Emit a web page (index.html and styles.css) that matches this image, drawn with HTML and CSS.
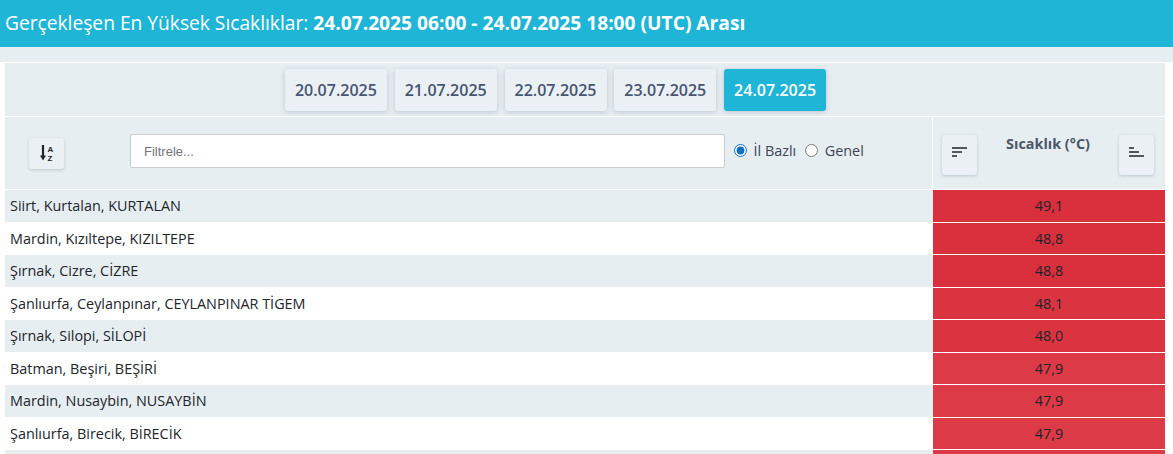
FILE: index.html
```html
<!DOCTYPE html>
<html lang="tr">
<head>
<meta charset="utf-8">
<title>Gerçekleşen En Yüksek Sıcaklıklar</title>
<link rel="stylesheet" href="styles.css">
</head>
<body>
<header class="title-bar">Gerçekleşen En Yüksek Sıcaklıklar: <b>24.07.2025 06:00 - 24.07.2025 18:00 (UTC) Arası</b></header>
<div class="strip"></div>
<main class="panel">
  <nav class="dates">
    <button class="date">20.07.2025</button>
    <button class="date">21.07.2025</button>
    <button class="date">22.07.2025</button>
    <button class="date">23.07.2025</button>
    <button class="date active">24.07.2025</button>
  </nav>
  <div class="tools">
    <div class="tools-left">
      <button class="icon-btn az" aria-label="A-Z">
        <svg width="14" height="19" viewBox="0 0 14 19"><path d="M3 1v12" fill="none" stroke="#212529" stroke-width="2.200"/><path d="M0 11.500h6l-3 5z" fill="#212529"/><text x="7.500" y="8" class="az-t">A</text><text x="7.500" y="17" class="az-t">Z</text></svg>
      </button>
      <input class="filter" type="text" placeholder="Filtrele...">
      <label class="radio"><input type="radio" name="scope" checked>İl Bazlı</label>
      <label class="radio"><input type="radio" name="scope">Genel</label>
    </div>
    <div class="tools-right">
      <button class="icon-btn sort">
        <svg width="15" height="10" viewBox="0 0 15 10"><path d="M0 1h15M0 5h10M0 9h5" stroke="#212529" stroke-width="1.700"/></svg>
      </button>
      <div class="col-title">Sıcaklık (°C)</div>
      <button class="icon-btn sort">
        <svg width="15" height="10" viewBox="0 0 15 10"><path d="M0 1h5M0 5h10M0 9h15" stroke="#212529" stroke-width="1.700"/></svg>
      </button>
    </div>
  </div>
  <div class="row odd"><div class="name">Siirt, Kurtalan, KURTALAN</div><div class="val t1">49,1</div></div>
  <div class="row"><div class="name">Mardin, Kızıltepe, KIZILTEPE</div><div class="val t1">48,8</div></div>
  <div class="row odd"><div class="name">Şırnak, Cizre, CİZRE</div><div class="val t1">48,8</div></div>
  <div class="row"><div class="name">Şanlıurfa, Ceylanpınar, CEYLANPINAR TİGEM</div><div class="val t2">48,1</div></div>
  <div class="row odd"><div class="name">Şırnak, Silopi, SİLOPİ</div><div class="val t2">48,0</div></div>
  <div class="row"><div class="name">Batman, Beşiri, BEŞİRİ</div><div class="val t3">47,9</div></div>
  <div class="row odd"><div class="name">Mardin, Nusaybin, NUSAYBİN</div><div class="val t3">47,9</div></div>
  <div class="row"><div class="name">Şanlıurfa, Birecik, BİRECİK</div><div class="val t3">47,9</div></div>
  <div class="row odd"><div class="name"></div><div class="val t3"></div></div>
</main>
</body>
</html>
```
FILE: styles.css
```css
* { box-sizing: border-box; }
html, body { margin: 0; height: 454px; overflow: hidden; background: #fff; }
body { font-family: "Open Sans", sans-serif; font-size: 14.400px; color: #212529; }
.title-bar {
  height: 47px; background: #1fb5d6; color: #fff;
  font-size: 19.200px; line-height: 45px; padding-left: 5px; white-space: nowrap;
}
.title-bar b { font-weight: 700; }
.strip { height: 15px; background: #e7eef2; }
.panel { margin: 1px 8px 0 5px; height: 391px; overflow: hidden; }
.dates {
  height: 54px; background: #e7eef2; border-bottom: 1px solid #fff;
  display: flex; justify-content: center; align-items: flex-start; gap: 7.800px; padding: 6px 59px 0 0;
}
.date {
  width: 102px; height: 42px; border: 0; border-radius: 3px; padding: 0;
  background: #ebf0f5; color: #475570;
  font: 600 16px "Open Sans", sans-serif;
  box-shadow: 0 1px 5px rgba(60, 75, 100, .25);
}
.date.active { background: #1fb5d6; color: #fff; }
.tools { height: 73px; display: flex; background: #e7eef2; border-bottom: 1px solid #fff; }
.tools-left {
  width: 928px; display: flex; align-items: flex-start; padding: 17px 0 0 24px;
  border-right: 1px solid #fff;
}
.icon-btn {
  border: 0; border-radius: 3px; background: #ebf0f5; padding: 0;
  display: flex; align-items: center; justify-content: center;
  box-shadow: 0 1px 3px rgba(60, 75, 100, .25);
}
.az { width: 35px; height: 31px; margin-top: 4px; }
.az-t { font: 700 8px "Liberation Sans", sans-serif; fill: #212529; }
.filter {
  width: 595px; height: 34px; margin: 0 9px 0 66px; padding: 0 13px;
  border: 1px solid #c8ccd0; border-radius: 2px; background: #fff;
  font: 13px "Liberation Sans", sans-serif;
}
.filter::placeholder { color: #6f757b; opacity: 1; }
.radio {
  display: flex; align-items: center; height: 32px; color: #3d4654;
  margin-right: 9px; font-size: 14.400px;
}
.radio input { width: 13px; height: 13px; margin: 0 6.500px 0 0; accent-color: #0f6fc6; }
.tools-right { flex: 1; display: flex; justify-content: space-between; padding: 18px 11px 0 9px; }
.sort { width: 35px; height: 40px; padding-bottom: 6px; }
.col-title { font-size: 14.400px; font-weight: 700; color: #4b5768; line-height: 20px; margin-top: -1px; }
.row { display: flex; height: 32.500px; border-bottom: 1px solid #fff; }
.row.odd { background: #e7eef2; }
.name { width: 928px; padding-left: 5px; line-height: 31px; white-space: nowrap; }
.val { flex: 1; text-align: center; line-height: 31px; }
.t1 { background: #da2f3c; }
.t2 { background: #db3441; }
.t3 { background: #dc3a46; }
```
